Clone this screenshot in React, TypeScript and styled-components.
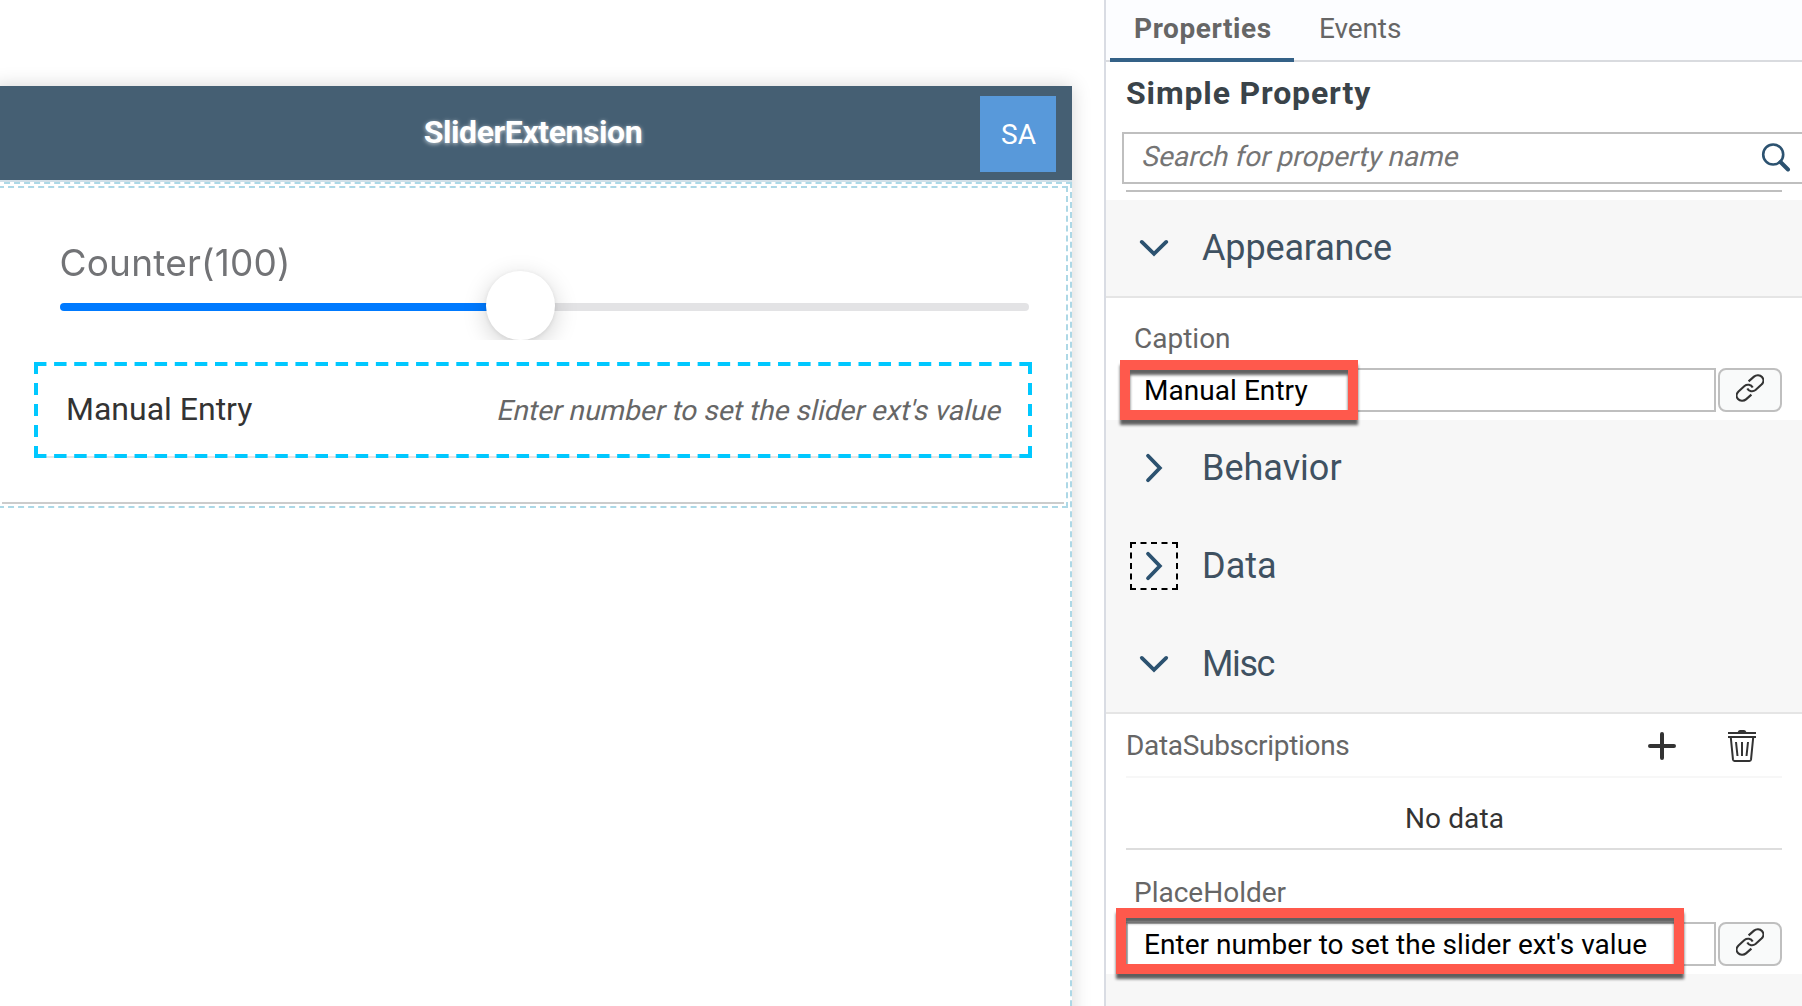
import React from "react";
import styled, { createGlobalStyle, css } from "styled-components";

const GlobalStyle = createGlobalStyle`
  *, *::before, *::after { box-sizing: border-box; }
  html, body { margin: 0; padding: 0; background: #fff; overflow: hidden; }
  body { font-family: Roboto, "Liberation Sans", sans-serif; font-size: 28px; }
`;

const Page = styled.div`
  display: flex;
  width: 1802px;
  height: 1006px;
  overflow: hidden;
`;

/* Device preview */

const Canvas = styled.main`
  flex: 0 0 1104px;
  padding-top: 86px;
  overflow: hidden;
`;

const Device = styled.section`
  display: flex;
  flex-direction: column;
  width: 1078px;
  height: 1000px;
  margin-left: -6px;
  background: #fff;
  box-shadow: 0 0 18px rgba(0, 0, 0, 0.17);
`;

const DeviceHeader = styled.header`
  display: grid;
  grid-template-columns: 92px 1fr 92px;
  align-items: center;
  flex: 0 0 96px;
  background: #455f73;
  border-bottom: 2px solid #d0dfe8;
`;

const DeviceTitle = styled.h1`
  grid-column: 2;
  margin: 0 0 1px;
  text-align: center;
  font-size: 32px;
  font-weight: 700;
  line-height: 93px;
  letter-spacing: -0.43px;
  color: #fff;
  text-shadow: 0 1px 4px rgba(255, 255, 255, 0.7);
`;

const Avatar = styled.div`
  width: 76px;
  height: 76px;
  margin-top: 2px;
  padding-left: 1px;
  text-align: center;
  line-height: 77px;
  color: #fff;
  background: #5899da;
`;

const DropZone = styled.div`
  flex: 1;
  padding: 2px;
  border: 2px dashed #add8e6;
`;

const SectionZone = styled.div`
  height: 322px;
  padding: 0 2px 2px;
  border: 2px dashed #add8e6;
`;

const Form = styled.div`
  display: flex;
  flex-direction: column;
  gap: 22px;
  height: 316px;
  padding: 0 32px;
  border-bottom: 2px solid #ccc;
`;

const SliderCell = styled.div`
  height: 152px;
  padding: 53px 3px 0 25.5px;
  overflow: hidden;
`;

const SliderLabel = styled.div`
  height: 62px;
  font-family: Inter, sans-serif;
  font-size: 37px;
  line-height: 44px;
  letter-spacing: 0.2px;
  color: #727376;
  filter: blur(0.5px);
`;

const Track = styled.div`
  position: relative;
  height: 8px;
  border-radius: 4px;
  background: linear-gradient(to right, #007aff 0 461px, #e3e3e5 461px);
`;

const Thumb = styled.div`
  position: absolute;
  left: 426.5px;
  top: -32px;
  width: 68.5px;
  height: 68.5px;
  border-radius: 50%;
  background: #fff;
  box-shadow: 0 6px 24px rgba(0, 0, 0, 0.18), 0 1px 4px rgba(0, 0, 0, 0.08);
`;

const dashX = "linear-gradient(to right, #00c8ff 12px, transparent 12px)";
const dashY = "linear-gradient(to bottom, #00c8ff 12px, transparent 12px)";

const EntryCell = styled.div`
  display: flex;
  align-items: baseline;
  justify-content: space-between;
  height: 96px;
  padding: 4px 32px;
  background:
    ${dashX} left top / 20.122px 4px repeat-x,
    ${dashX} left bottom / 20.122px 4px repeat-x,
    ${dashY} left top / 4px 21px repeat-y,
    ${dashY} right top / 4px 21px repeat-y,
    linear-gradient(#e5e5e5, #e5e5e5) left bottom / 100% 2px no-repeat;
`;

const EntryLabel = styled.span`
  font-size: 32px;
  line-height: 86px;
  color: #333;
`;

const EntryHint = styled.span`
  transform: skewX(-13deg);
  transform-origin: 0 26px;
  letter-spacing: 0.05px;
  color: #666;
`;

/* Property pane */

const Panel = styled.aside`
  flex: 1;
  display: flex;
  flex-direction: column;
  min-width: 0;
  border-left: 2px solid #d9dce3;
  background: #fff;
`;

const TabBar = styled.nav`
  display: flex;
  flex: 0 0 62px;
  padding-left: 4px;
  background: linear-gradient(#d9dbdf, #d9dbdf) left bottom / 100% 2px no-repeat #fcfdff;
`;

const Tab = styled.div<{ $active?: boolean }>`
  padding: 0 24px;
  line-height: 58px;
  color: #666;
  ${(p) =>
    p.$active
      ? css`
          width: 185px;
          font-weight: 700;
          letter-spacing: 0.59px;
          background: linear-gradient(#346187, #346187) left bottom / 184px 4px no-repeat;
        `
      : css`
          letter-spacing: -0.1px;
        `}
`;

const PanelTitle = styled.h2`
  flex: 0 0 70px;
  margin: 0;
  padding-left: 20px;
  font-size: 32px;
  font-weight: 700;
  line-height: 62px;
  letter-spacing: 0.86px;
  color: #3a4349;
`;

const SearchBox = styled.div`
  display: flex;
  justify-content: space-between;
  flex: 0 0 52px;
  margin: 0 -8px 6px 16px;
  padding: 0 17px;
  border: 2px solid #bfbfbf;
`;

const SearchHint = styled.span`
  line-height: 45px;
  transform: skewX(-13deg);
  transform-origin: 0 32px;
  color: #757575;
`;

const SearchGlyph = styled.svg`
  width: 30px;
  height: 30px;
  margin-top: 8px;
`;

const Rule = styled.div`
  flex: 0 0 2px;
  margin: 0 20px 8px;
  background: #bfbfbf;
`;

const GroupHeader = styled.div<{ $open?: boolean }>`
  display: flex;
  align-items: center;
  gap: 24px;
  flex: 0 0 98px;
  padding-left: 24px;
  background: #f7f7f7;
  border-bottom: 2px solid ${(p) => (p.$open ? "#e5e5e5" : "#f7f7f7")};
`;

const Toggle = styled.span<{ $focused?: boolean }>`
  display: flex;
  align-items: center;
  justify-content: center;
  width: 48px;
  height: 48px;
  border: 2px dashed ${(p) => (p.$focused ? "#000" : "transparent")};
`;

const GroupName = styled.span<{ $tracking?: number }>`
  font-size: 36px;
  line-height: 96px;
  letter-spacing: ${(p) => p.$tracking ?? 0}px;
  color: #3f5161;
`;

const Field = styled.div<{ $top: number }>`
  padding: ${(p) => p.$top}px 20px 8px;
`;

const FieldLabel = styled.div`
  height: 50px;
  padding-left: 8px;
  line-height: 42px;
  color: #666;
`;

const FieldRow = styled.div`
  position: relative;
  display: flex;
  gap: 2px;
  height: 44px;
`;

const Input = styled.div<{ $tracking: number }>`
  flex: 1;
  padding-left: 16px;
  border: 2px solid #bfbfbf;
  line-height: 42px;
  letter-spacing: ${(p) => p.$tracking}px;
  color: #000;
`;

const LinkButton = styled.div`
  display: flex;
  justify-content: center;
  width: 64px;
  padding-top: 4px;
  border: 2px solid #bfbfbf;
  border-radius: 8px;
  background: #f9fafa;
`;

const Highlight = styled.div<{ $x: number; $y: number; $w: number; $h: number }>`
  position: absolute;
  left: ${(p) => p.$x}px;
  top: ${(p) => p.$y}px;
  width: ${(p) => p.$w}px;
  height: ${(p) => p.$h}px;
  border: 10px solid #ff594c;
  filter: drop-shadow(0 5px 1.5px rgba(0, 0, 0, 0.62));
`;

const ListToolbar = styled.div`
  display: flex;
  align-items: center;
  flex: 0 0 64px;
  margin: 0 20px;
  border-bottom: 2px solid #f7f7f7;
  color: #666;
  letter-spacing: -0.31px;
`;

const ListTitle = styled.span`
  flex: 1;
  line-height: 60px;
  padding-top: 2px;
`;

const ToolGlyph = styled.svg`
  width: 32px;
  height: 32px;
  margin: 2px 24px 0;
  overflow: visible;
`;

const EmptyRow = styled.div`
  flex: 0 0 72px;
  margin: 0 20px;
  padding: 11px 0 0 1px;
  border-bottom: 2px solid #ddd;
  text-align: center;
  line-height: 59px;
  letter-spacing: 0.1px;
  color: #333;
`;

const PanelRest = styled.div`
  flex: 1;
  background: #f7f7f7;
`;

const Chevron = ({ open }: { open?: boolean }) => (
  <svg width="32" height="32" viewBox="0 0 32 32" fill="none" stroke="#2c5270" strokeWidth="3.8" strokeLinecap="round" strokeLinejoin="miter">
    <path d={open ? "M3.8 9.9 16 21.8 28.2 9.9" : "M10 3.8 21.8 16 10 28.2"} />
  </svg>
);

const LinkIcon = () => (
  <svg width="28" height="28" viewBox="0 0 28 28" fill="none" stroke="#333" strokeWidth="2.1">
    <path d="M12.6 7.4 18 2.6C20.4.5 24 .8 26 3s1.700 5.500-.5 7.600L19.500 16c-2.600 2.100-6.600 1.500-8.200-1.500" />
    <path d="M15.400 20.600 10 25.400C7.600 27.500 4 27.200 2 25s-1.700-5.500.5-7.600L8.500 12c2.600-2.100 6.600-1.500 8.200 1.500" />
  </svg>
);

function PropertyField(props: {
  label: string;
  value: string;
  top: number;
  tracking: number;
  mark: [number, number, number, number];
}) {
  const [x, y, w, h] = props.mark;
  return (
    <Field $top={props.top}>
      <FieldLabel>{props.label}</FieldLabel>
      <FieldRow>
        <Input $tracking={props.tracking}>{props.value}</Input>
        <LinkButton>
          <LinkIcon />
        </LinkButton>
        <Highlight $x={x} $y={y} $w={w} $h={h} />
      </FieldRow>
    </Field>
  );
}

function Group(props: { name: string; open?: boolean; focused?: boolean; tracking?: number }) {
  return (
    <GroupHeader $open={props.open}>
      <Toggle $focused={props.focused}>
        <Chevron open={props.open} />
      </Toggle>
      <GroupName $tracking={props.tracking}>{props.name}</GroupName>
    </GroupHeader>
  );
}

export default function App() {
  return (
    <Page>
      <GlobalStyle />
      <Canvas>
        <Device>
          <DeviceHeader>
            <DeviceTitle>SliderExtension</DeviceTitle>
            <Avatar>SA</Avatar>
          </DeviceHeader>
          <DropZone>
            <SectionZone>
              <Form>
                <SliderCell>
                  <SliderLabel>Counter(100)</SliderLabel>
                  <Track>
                    <Thumb />
                  </Track>
                </SliderCell>
                <EntryCell>
                  <EntryLabel>Manual Entry</EntryLabel>
                  <EntryHint>Enter number to set the slider ext's value</EntryHint>
                </EntryCell>
              </Form>
            </SectionZone>
          </DropZone>
        </Device>
      </Canvas>

      <Panel>
        <TabBar>
          <Tab $active>Properties</Tab>
          <Tab>Events</Tab>
        </TabBar>
        <PanelTitle>Simple Property</PanelTitle>
        <SearchBox>
          <SearchHint>Search for property name</SearchHint>
          <SearchGlyph viewBox="0 0 30 30" fill="none" stroke="#2c5270">
            <circle cx="12.200" cy="12.500" r="10" strokeWidth="2.600" />
            <path d="M19.500 20 27 27.500" strokeWidth="4" strokeLinecap="round" />
          </SearchGlyph>
        </SearchBox>
        <Rule />
        <Group name="Appearance" open tracking={-0.15} />
        <PropertyField label="Caption" value="Manual Entry" top={20} tracking={0.05} mark={[-6, -8, 238, 60]} />
        <Group name="Behavior" />
        <Group name="Data" focused />
        <Group name="Misc" open tracking={-1.4} />
        <ListToolbar>
          <ListTitle>DataSubscriptions</ListTitle>
          <ToolGlyph viewBox="0 0 32 32" fill="none" stroke="#333" strokeWidth="4" strokeLinecap="round">
            <path d="M16 4v24M4 16h24" />
          </ToolGlyph>
          <ToolGlyph viewBox="0 0 32 32" fill="none" stroke="#333" strokeWidth="2">
            <path d="M11.500 2.200Q12.500 0 14 0h4q1.500 0 2.500 2.200Z" fill="#333" stroke="none" />
            <path d="M2 3h28M2 7h28" />
            <path d="M4.800 7.500 7 29.700Q7.200 31 8.500 31h15Q24.800 31 25 29.700L27.200 7.500M10 12l1.500 14M16 12v14M22 12l-1.500 14" />
          </ToolGlyph>
        </ListToolbar>
        <EmptyRow>No data</EmptyRow>
        <PropertyField
          label="PlaceHolder"
          value="Enter number to set the slider ext's value"
          top={22}
          tracking={0.03}
          mark={[-10, -14, 568, 66]}
        />
        <PanelRest />
      </Panel>
    </Page>
  );
}
